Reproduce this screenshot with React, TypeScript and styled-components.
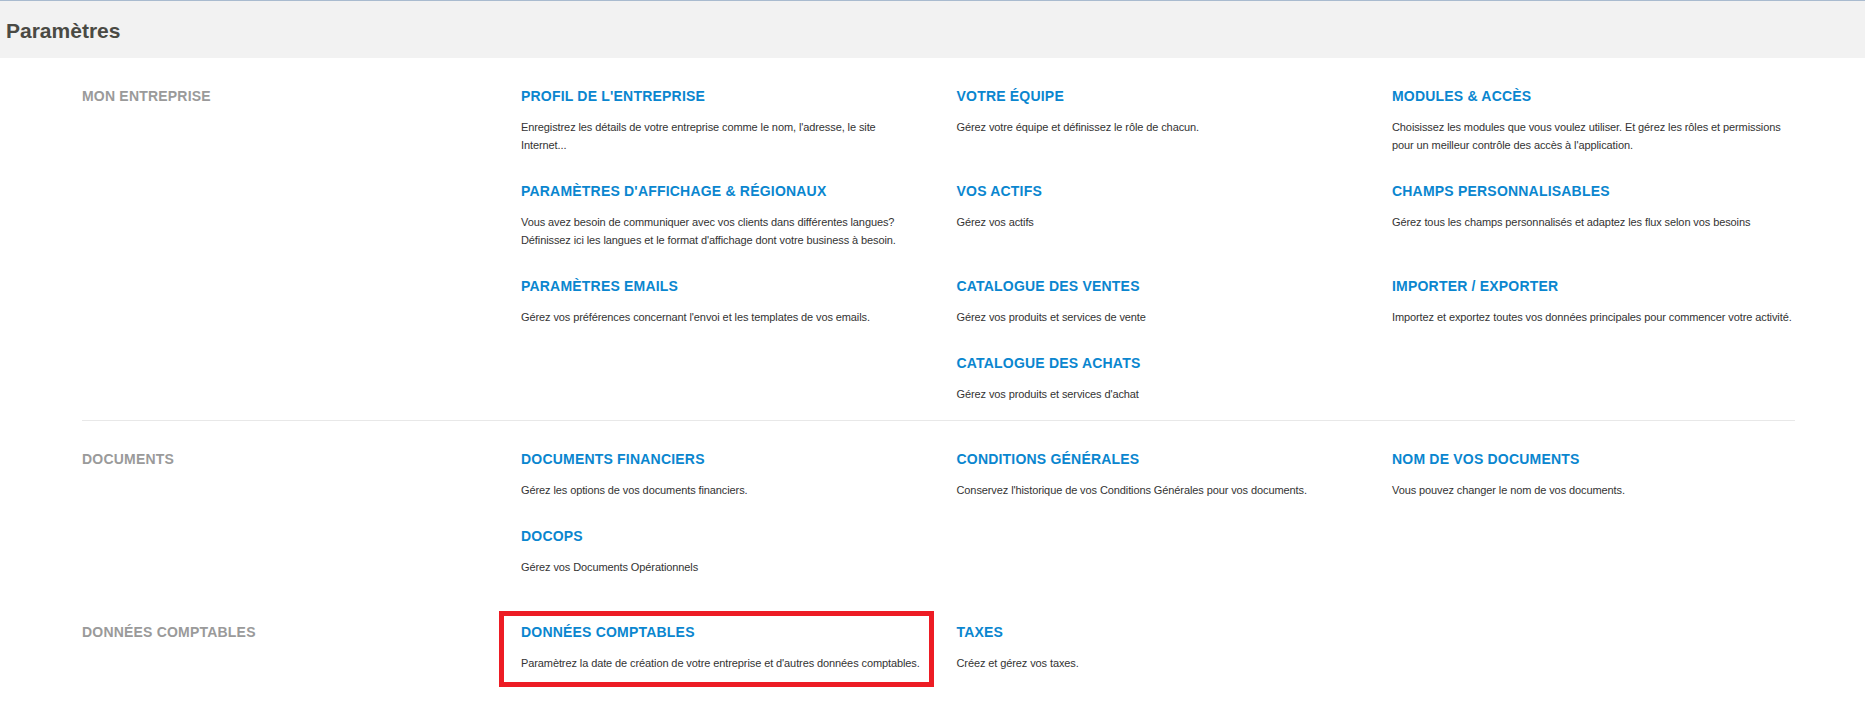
import React from "react";
import styled, { createGlobalStyle } from "styled-components";

const GlobalStyle = createGlobalStyle`
  html, body {
    margin: 0;
    padding: 0;
    background: #fff;
    font-family: "Liberation Sans", Arial, sans-serif;
  }
`;

const Page = styled.div`
  width: 1865px;
  min-height: 724px;
  border-top: 1px solid #a9bbcf;
  background: #fff;
`;

const Header = styled.header`
  height: 57px;
  display: flex;
  align-items: center;
  padding: 2px 0 0 6px;
  box-sizing: border-box;
  background: #f2f2f2;
`;

const PageTitle = styled.h1`
  margin: 0;
  font-size: 21px;
  font-weight: 700;
  color: #4a4a44;
`;

const Content = styled.div`
  padding: 0 70px 0 82px;
`;

const Section = styled.section<{ $divider?: boolean }>`
  display: flex;
  padding: 28px 0 17px;
  border-bottom: 1px solid ${(p) => (p.$divider ? "#e8e8e8" : "transparent")};
`;

const SectionLabel = styled.h2`
  width: 439px;
  flex-shrink: 0;
  margin: 0;
  font-size: 14px;
  line-height: 20px;
  font-weight: 700;
  letter-spacing: 0.2px;
  text-transform: uppercase;
  color: #9a9a9a;
`;

const ItemGrid = styled.div`
  display: grid;
  grid-template-columns: repeat(3, 435.5px);
  row-gap: 27px;
`;

const Item = styled.div<{ $highlighted?: boolean }>`
  position: relative;

  ${(p) =>
    p.$highlighted &&
    `
    &::after {
      content: "";
      position: absolute;
      left: -22px;
      top: -11px;
      width: 435px;
      height: 76px;
      box-sizing: border-box;
      border: 5px solid #ed1c24;
      pointer-events: none;
    }
  `}
`;

const ItemTitle = styled.a`
  display: block;
  font-size: 14px;
  line-height: 20px;
  font-weight: 700;
  letter-spacing: 0.2px;
  text-transform: uppercase;
  color: #0a86cf;
  text-decoration: none;
  cursor: pointer;
`;

const ItemText = styled.p`
  margin: 12px 0 0;
  max-width: 401px;
  font-size: 11px;
  line-height: 18px;
  letter-spacing: -0.1px;
  color: #333;
`;

type Entry = { title: string; text: string; highlighted?: boolean } | null;
type Group = { label: string; items: Entry[]; divider?: boolean };

const groups: Group[] = [
  {
    label: "Mon entreprise",
    divider: true,
    items: [
      {
        title: "Profil de l'entreprise",
        text: "Enregistrez les détails de votre entreprise comme le nom, l'adresse, le site Internet...",
      },
      { title: "Votre équipe", text: "Gérez votre équipe et définissez le rôle de chacun." },
      {
        title: "Modules & accès",
        text: "Choisissez les modules que vous voulez utiliser. Et gérez les rôles et permissions pour un meilleur contrôle des accès à l'application.",
      },
      {
        title: "Paramètres d'affichage & régionaux",
        text: "Vous avez besoin de communiquer avec vos clients dans différentes langues? Définissez ici les langues et le format d'affichage dont votre business à besoin.",
      },
      { title: "Vos actifs", text: "Gérez vos actifs" },
      {
        title: "Champs personnalisables",
        text: "Gérez tous les champs personnalisés et adaptez les flux selon vos besoins",
      },
      {
        title: "Paramètres emails",
        text: "Gérez vos préférences concernant l'envoi et les templates de vos emails.",
      },
      { title: "Catalogue des ventes", text: "Gérez vos produits et services de vente" },
      {
        title: "Importer / Exporter",
        text: "Importez et exportez toutes vos données principales pour commencer votre activité.",
      },
      null,
      { title: "Catalogue des achats", text: "Gérez vos produits et services d'achat" },
      null,
    ],
  },
  {
    label: "Documents",
    items: [
      { title: "Documents financiers", text: "Gérez les options de vos documents financiers." },
      {
        title: "Conditions générales",
        text: "Conservez l'historique de vos Conditions Générales pour vos documents.",
      },
      { title: "Nom de vos documents", text: "Vous pouvez changer le nom de vos documents." },
      { title: "DocOps", text: "Gérez vos Documents Opérationnels" },
    ],
  },
  {
    label: "Données comptables",
    items: [
      {
        title: "Données comptables",
        text: "Paramètrez la date de création de votre entreprise et d'autres données comptables.",
        highlighted: true,
      },
      { title: "Taxes", text: "Créez et gérez vos taxes." },
    ],
  },
];

export default function App() {
  return (
    <>
      <GlobalStyle />
      <Page>
        <Header>
          <PageTitle>Paramètres</PageTitle>
        </Header>
        <Content>
          {groups.map((g) => (
            <Section key={g.label} $divider={g.divider}>
              <SectionLabel>{g.label}</SectionLabel>
              <ItemGrid>
                {g.items.map((it, i) =>
                  it ? (
                    <Item key={it.title} $highlighted={it.highlighted}>
                      <ItemTitle>{it.title}</ItemTitle>
                      <ItemText>{it.text}</ItemText>
                    </Item>
                  ) : (
                    <div key={`empty-${i}`} />
                  )
                )}
              </ItemGrid>
            </Section>
          ))}
        </Content>
      </Page>
    </>
  );
}
